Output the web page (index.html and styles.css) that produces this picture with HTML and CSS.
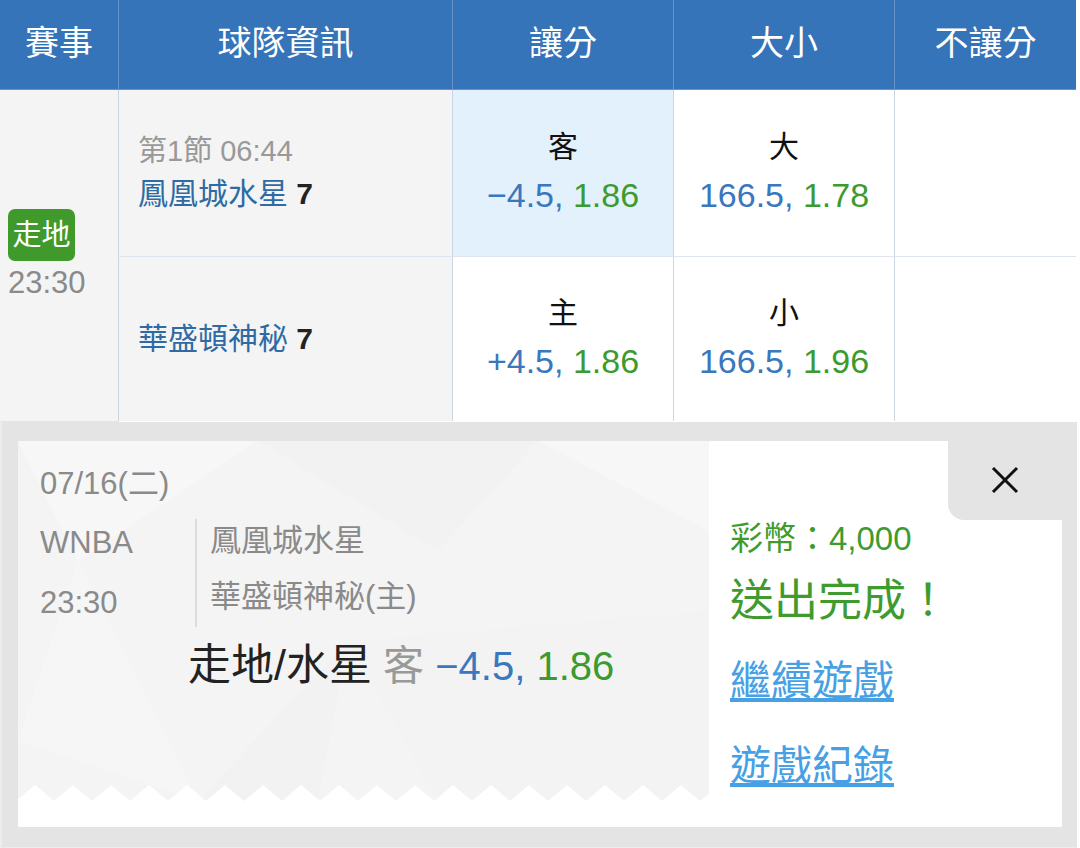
FILE: index.html
```html
<!DOCTYPE html>
<html lang="zh-Hant">
<head>
  <meta charset="UTF-8">
  <meta name="viewport" content="width=device-width, initial-scale=1.0">
  <title>走地 投注</title>
  <link rel="stylesheet" href="styles.css">
</head>
<body>
  <table class="odds">
    <thead>
      <tr>
        <th class="c-event">賽事</th>
        <th class="c-team">球隊資訊</th>
        <th class="c-odd">讓分</th>
        <th class="c-odd">大小</th>
        <th class="c-ml">不讓分</th>
      </tr>
    </thead>
    <tbody>
      <tr class="row-away">
        <td class="event" rowspan="2">
          <span class="live">走地</span>
          <div class="time">23:30</div>
        </td>
        <td class="team">
          <div class="period">第1節 06:44</div>
          <div class="name">鳳凰城水星 <b>7</b></div>
        </td>
        <td class="odd picked">
          <div class="side">客</div>
          <div class="line"><span class="num">−4.5,</span> <span class="price">1.86</span></div>
        </td>
        <td class="odd">
          <div class="side">大</div>
          <div class="line"><span class="num">166.5,</span> <span class="price">1.78</span></div>
        </td>
        <td class="odd"></td>
      </tr>
      <tr class="row-home">
        <td class="team">
          <div class="name">華盛頓神秘 <b>7</b></div>
        </td>
        <td class="odd">
          <div class="side">主</div>
          <div class="line"><span class="num">+4.5,</span> <span class="price">1.86</span></div>
        </td>
        <td class="odd">
          <div class="side">小</div>
          <div class="line"><span class="num">166.5,</span> <span class="price">1.96</span></div>
        </td>
        <td class="odd"></td>
      </tr>
    </tbody>
  </table>

  <div class="slip-wrap">
    <div class="slip">
      <div class="ticket">
        <svg class="ticket-bg" width="691" height="360" viewBox="0 0 691 360">
          <polygon points="0,0 240,0 60,120" fill="#f7f7f7"/>
          <polygon points="240,0 520,0 420,110" fill="#f2f2f2"/>
          <polygon points="60,120 0,300 180,360" fill="#f6f6f6"/>
          <polygon points="330,200 691,170 691,360 420,360" fill="#f3f3f3"/>
          <polygon points="520,0 691,0 691,90" fill="#f7f7f7"/>
          <polygon points="180,360 330,200 300,360" fill="#f2f2f2"/>
        </svg>
        <div class="ticket-body">
          <div class="date">07/16(二)</div>
          <div class="match">
            <div class="league">
              <div>WNBA</div>
              <div>23:30</div>
            </div>
            <div class="teams">
              <div>鳳凰城水星</div>
              <div>華盛頓神秘(主)</div>
            </div>
          </div>
          <div class="bet"><span class="bet-team">走地/水星</span> <span class="bet-side">客</span> <span class="num">−4.5,</span> <span class="price">1.86</span></div>
        </div>
        <svg class="zigzag" width="691" height="16">
          <defs>
            <pattern id="zz" width="38" height="16" patternUnits="userSpaceOnUse" x="-2">
              <path d="M0 16 L19 0 L38 16 Z" fill="#fff"/>
            </pattern>
          </defs>
          <rect width="691" height="16" fill="url(#zz)"/>
        </svg>
      </div>
      <div class="result">
        <button class="close" title="關閉">
          <svg width="28" height="28" viewBox="0 0 28 28"><path d="M2 2 L26 26 M26 2 L2 26" stroke="#111" stroke-width="3" fill="none"/></svg>
        </button>
        <div class="coins">彩幣：4,000</div>
        <div class="done">送出完成！</div>
        <a class="link" href="#">繼續遊戲</a>
        <a class="link" href="#">遊戲紀錄</a>
      </div>
    </div>
  </div>
</body>
</html>
```

FILE: styles.css
```css
body {
  margin: 0;
  background: #fff;
  font-family: "Liberation Sans", "Noto Sans CJK TC", sans-serif;
  width: 1080px;
}
.odds {
  width: 1076px;
  border-collapse: collapse;
  table-layout: fixed;
}
.odds th {
  height: 85px;
  padding: 0 0 4px;
  background-color: #3574b9;
  color: #fff;
  font-size: 34px;
  line-height: 40px;
  font-weight: normal;
  border-left: 1px solid #6793c8;
  border-bottom: 1px solid #6793c8;
}
.odds th:first-child {
  border-left: none;
}
.c-event { width: 118px; }
.c-team { width: 333px; }
.c-odd { width: 220px; }
.odds td {
  padding: 0;
  border-left: 1px solid #cbd6e3;
  border-bottom: 1px solid #dfe5ec;
  vertical-align: middle;
}
.row-away td { height: 166px; }
.row-home td { height: 164px; border-bottom: none; }
td.event {
  border-left: none;
  background-color: #f4f4f4;
  padding-left: 8px;
}
.live {
  display: inline-block;
  width: 67px;
  height: 52px;
  line-height: 52px;
  border-radius: 7px;
  background-color: #3f9a2b;
  color: #fff;
  font-size: 29px;
  text-align: center;
}
.time {
  margin-top: 4px;
  color: #8a8a8a;
  font-size: 31px;
  line-height: 36px;
}
td.team {
  background-color: #f4f4f4;
  padding-left: 19px;
}
.period {
  color: #999;
  font-size: 29px;
  line-height: 42px;
}
.name {
  color: #2f6aa3;
  font-size: 30px;
  line-height: 44px;
}
.name b {
  color: #222;
}
td.odd {
  text-align: center;
  background-color: #fff;
}
td.picked {
  background-color: #e2f1fb;
}
.side {
  color: #111;
  font-size: 30px;
  line-height: 44px;
}
.line {
  font-size: 34px;
  line-height: 52px;
}
.num {
  color: #3a77bc;
}
.price {
  color: #3d9a2f;
}

.slip-wrap {
  width: 1077px;
  box-sizing: border-box;
  background-color: #e4e4e4;
  padding: 19px 15px 20px 16px;
  border-left: 2px solid #ececec;
  border-bottom: 2px solid #ececec;
}
.slip {
  display: flex;
  height: 386px;
  background-color: #fff;
}
.ticket {
  position: relative;
  width: 691px;
  height: 360px;
  display: flex;
  flex-direction: column;
  background-color: #f4f4f4;
  overflow: hidden;
}
.ticket-bg {
  position: absolute;
  left: 0;
  top: 0;
}
.ticket-body {
  position: relative;
  flex: 1;
  padding: 23px 0 0 22px;
  color: #8a8a8a;
  font-size: 31px;
}
.date {
  line-height: 40px;
}
.match {
  display: flex;
  margin-top: 15px;
}
.league {
  width: 155px;
  display: flex;
  flex-direction: column;
}
.league div {
  line-height: 60px;
}
.league div:first-child {
  margin-top: -6px;
}
.teams {
  border-left: 2px solid #dcdcdc;
  padding-left: 13px;
  height: 108px;
}
.teams div {
  line-height: 56px;
  margin-top: -6px;
}
.teams div + div {
  margin-top: 0;
}
.bet {
  margin: 6px 0 0 148px;
  color: #222;
  font-size: 40px;
  line-height: 52px;
}
.bet-team {
  font-size: 43px;
}
.bet-side {
  color: #999;
  font-size: 41px;
}
.zigzag {
  position: relative;
  display: block;
}
.result {
  position: relative;
  flex: 1;
  padding: 76px 0 0 21px;
}
.close {
  position: absolute;
  top: 0;
  right: 0;
  width: 114px;
  height: 79px;
  border: none;
  padding: 0;
  background-color: #e4e4e4;
  border-bottom-left-radius: 16px;
  display: flex;
  align-items: center;
  justify-content: center;
  cursor: pointer;
}
.coins {
  color: #3f9b2e;
  font-size: 33px;
  line-height: 44px;
}
.done {
  color: #3f9b2e;
  font-size: 44px;
  line-height: 60px;
  margin-top: 10px;
}
.link {
  display: block;
  width: fit-content;
  color: #47a0e4;
  font-size: 41px;
  line-height: 56px;
  margin-top: 22px;
}
.link + .link {
  margin-top: 29px;
}
```
